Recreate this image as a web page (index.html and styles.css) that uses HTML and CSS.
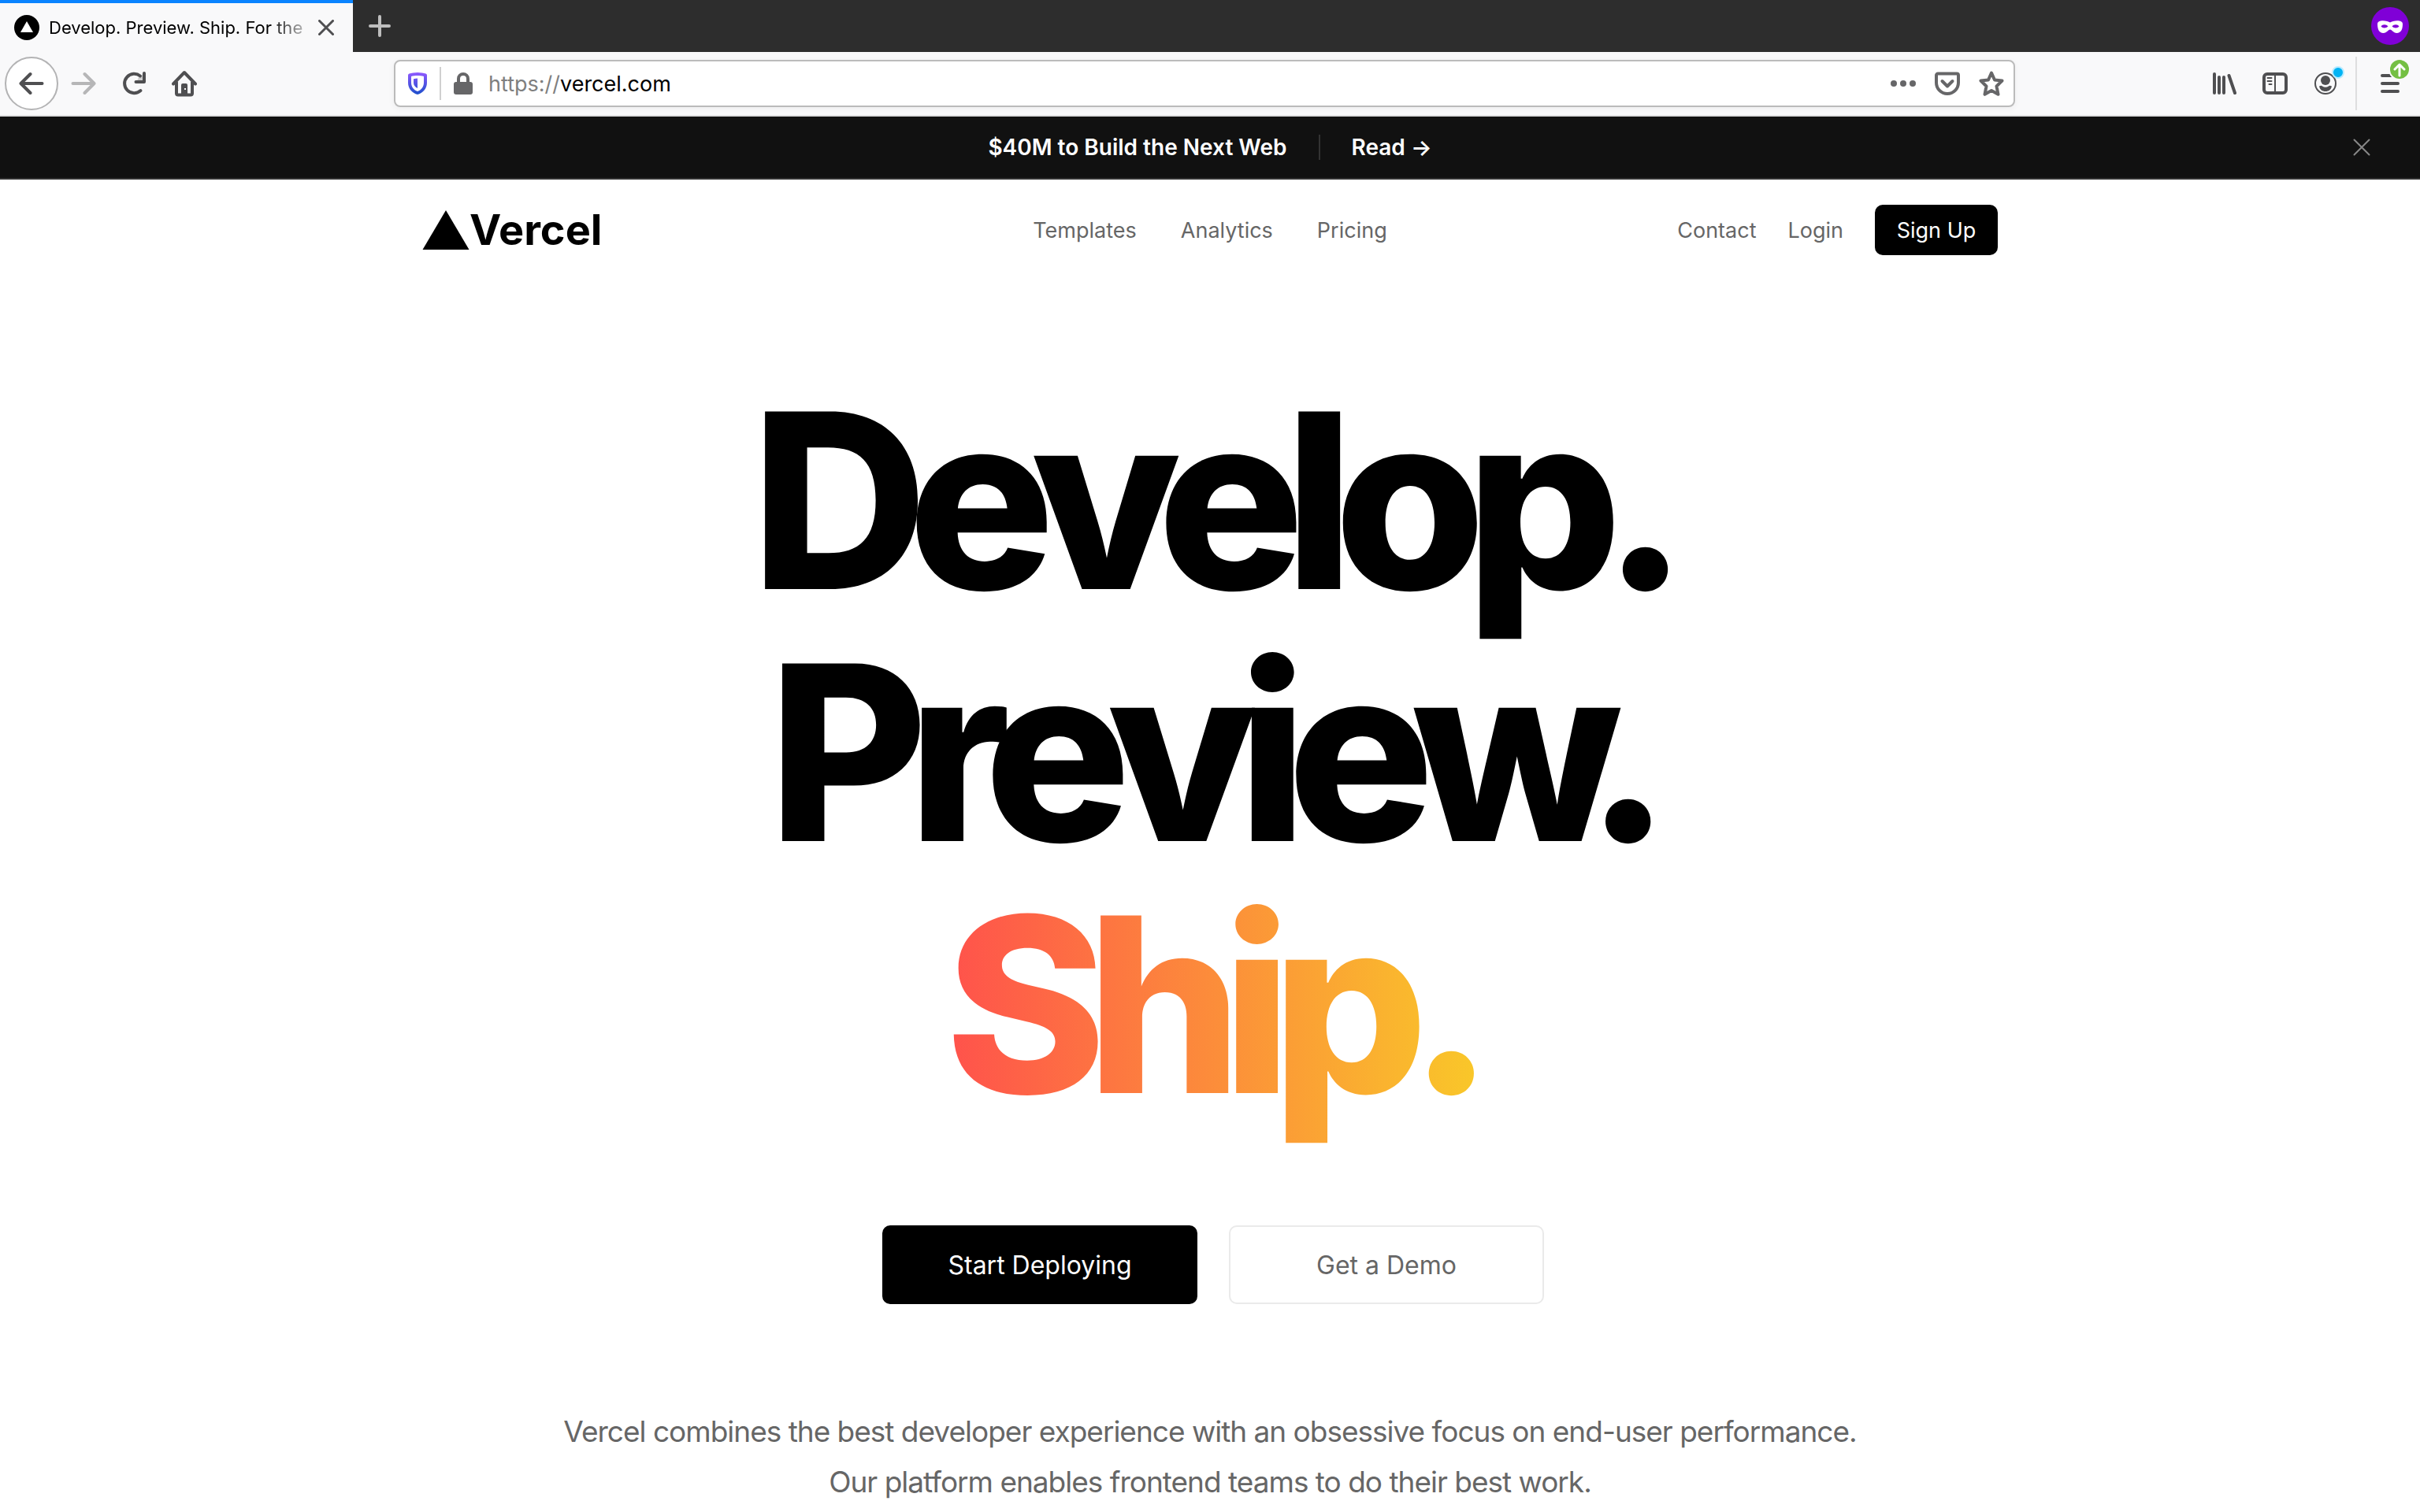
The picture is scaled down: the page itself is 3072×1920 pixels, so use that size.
FILE: index.html
```html
<!DOCTYPE html>
<html lang="en">
<head>
<meta charset="utf-8">
<title>Develop. Preview. Ship. For the best frontend teams</title>
<link rel="stylesheet" href="styles.css">
</head>
<body>
<div class="browser">
  <div class="tab-strip">
    <div class="tab">
      <svg class="favicon" viewBox="0 0 32 32" aria-hidden="true"><circle cx="16" cy="16" r="16" fill="#000"/><path d="M16 8l8 14H8z" fill="#fff"/></svg>
      <span class="tab-title">Develop. Preview. Ship. For the</span>
      <button class="icon-button tab-close" aria-label="Close tab"><svg width="20" height="20" viewBox="0 0 20 20"><path d="M1.500 1.500l17 17M18.500 1.500l-17 17" class="stroke"/></svg></button>
    </div>
    <button class="icon-button new-tab" aria-label="New tab"><svg width="28" height="28" viewBox="0 0 28 28"><path d="M14 2v24M2 14h24" class="stroke light"/></svg></button>
    <svg class="private" viewBox="0 0 48 48" role="img" aria-label="Private browsing"><circle cx="24" cy="24" r="24" fill="#8000d7"/><path d="M24 19.500C21 17 8 15 8 21.500C8 28 10 33 15.500 33C20 33 21.500 28.500 24 28.500C26.500 28.500 28 33 32.500 33C38 33 40 28 40 21.500C40 15 27 17 24 19.500z" fill="#fff"/><path d="M12.500 24.500c2-3 6.500-3 9 0c-2.500 2.500-7 2.500-9 0zM26.500 24.500c2.500-3 7-3 9 0c-2 2.500-6.500 2.500-9 0z" fill="#8000d7"/></svg>
  </div>

  <div class="toolbar">
    <div class="tool-group">
      <button class="icon-button back" aria-label="Back"><svg width="32" height="32" viewBox="0 0 32 32"><path d="M29.500 16H3M14.500 4L2.500 16l12 12" class="stroke thick"/></svg></button>
      <button class="icon-button forward" aria-label="Forward"><svg width="32" height="32" viewBox="0 0 32 32"><path d="M2.500 16H29M17.500 4l12 12-12 12" class="stroke thick faint"/></svg></button>
      <button class="icon-button tool" aria-label="Reload"><svg width="32" height="32" viewBox="0 0 32 32"><path d="M24.500 25A12.200 12.200 0 1 1 24 6.500" class="stroke thick"/><path d="M29 3v11H18.500" class="stroke thick"/><path d="M22 8l6-4v9h-8z" fill="#4f4f51" fill-opacity=".25"/></svg></button>
      <button class="icon-button tool" aria-label="Home"><svg width="32" height="34" viewBox="0 0 32 34"><path d="M2 17.500L16 3l14 14.500M6 15.500v14a2 2 0 0 0 2 2h16a2 2 0 0 0 2-2v-14" class="stroke thick"/><path d="M12 31V19a2 2 0 0 1 2-2h4a2 2 0 0 1 2 2v12z" fill="#4f4f51"/><rect x="16" y="23" width="2" height="2" fill="#f9f9fa"/></svg></button>
    </div>

    <div class="url-bar">
      <svg width="24" height="28" viewBox="0 0 24 28" role="img" aria-label="Tracking protection"><defs><linearGradient id="shield" x1="0" y1="0" x2="0" y2="1"><stop offset="0" stop-color="#9059ff"/><stop offset="1" stop-color="#1c4fcb"/></linearGradient></defs><path d="M12 0C15.500 0 20 .8 22.500 1.500Q24 2 24 3.500V13C24 20.500 18.500 26.500 12 28C5.500 26.500 0 20.500 0 13V3.500Q0 2 1.500 1.500C4 .8 8.500 0 12 0zM12 4C9 4 6.500 4.400 4 5v8C4 18.500 7.500 22.500 12 24C16.500 22.500 20 18.500 20 13V5C17.500 4.400 15 4 12 4zM12 7.500V20C8.800 18.500 7 16 7 13V8.200Q9.500 7.500 12 7.500z" fill="url(#shield)" fill-rule="evenodd"/></svg>
      <span class="url-divider"></span>
      <svg width="24" height="28" viewBox="0 0 24 28" role="img" aria-label="Secure connection"><path d="M6 14V8a6 6 0 0 1 12 0v6" fill="none" stroke="#666668" stroke-width="4"/><rect y="12" width="24" height="16" rx="3" fill="#666668"/></svg>
      <a class="url-text" href="https://vercel.com"><span class="scheme">https://</span>vercel.com</a>
      <div class="url-actions">
        <button class="icon-button action" aria-label="Page actions"><svg width="32" height="8" viewBox="0 0 32 8" fill="#666668"><circle cx="4" cy="4" r="4"/><circle cx="16" cy="4" r="4"/><circle cx="28" cy="4" r="4"/></svg></button>
        <button class="icon-button action" aria-label="Save to Pocket"><svg width="32" height="30" viewBox="0 0 32 30"><path d="M4 2.500h24a2 2 0 0 1 2 2V14a14 14 0 0 1-28 0V4.500a2 2 0 0 1 2-2z" class="stroke thick soft"/><path d="M9.500 12l6.500 6.500 6.500-6.500" class="stroke thick soft"/></svg></button>
        <button class="icon-button action" aria-label="Bookmark this page"><svg width="32" height="32" viewBox="0 0 32 32"><path d="M16 2.500l4 9 9.500 1-7 7 2 10.300L16 25l-8.500 4.800 2-10.300-7-7 9.500-1z" class="stroke thick soft"/></svg></button>
      </div>
    </div>

    <div class="tool-group">
      <button class="icon-button tool" aria-label="Library"><svg width="30" height="28" viewBox="0 0 30 28"><path d="M2 2v24M8 6v20M14 6v20M20.500 4l7.500 22" class="stroke thick"/></svg></button>
      <button class="icon-button tool" aria-label="Sidebars"><svg width="32" height="28" viewBox="0 0 32 28"><rect x="2" y="2" width="28" height="24" rx="4" class="stroke thick"/><path d="M16 3v22" stroke="#4f4f51" stroke-width="2"/><path d="M6.500 7h5M6.500 11h5M8.500 15h3" class="stroke thin"/></svg></button>
      <button class="icon-button tool account" aria-label="Account"><svg width="28" height="28" viewBox="0 0 28 28"><circle cx="14" cy="14" r="13" class="stroke thin"/><circle cx="14" cy="10" r="6" fill="#4f4f51"/><path d="M6 17.500Q9 16 10 17.500Q14 20 18 17.500Q19 16 22 17.500C21 22 18 24 14 24S7 22 6 17.500z" fill="#4f4f51"/></svg><span class="notice"></span></button>
      <span class="menu-divider"></span>
      <button class="icon-button menu" aria-label="Open menu"><svg width="24" height="24" viewBox="0 0 24 24"><path d="M2 2h20M2 12h20M2 22h20" class="stroke thick"/></svg><svg class="update" viewBox="0 0 28 28"><circle cx="14" cy="14" r="14" fill="#f9f9fa"/><circle cx="14" cy="14" r="12" fill="#74bf43"/><path d="M14 22V8M8 14l6-6 6 6" fill="none" stroke="#fff" stroke-width="3" stroke-linecap="round" stroke-linejoin="round"/></svg></button>
    </div>
  </div>
</div>

<div class="banner">
  <span>$40M to Build the Next Web</span>
  <span class="banner-divider"></span>
  <a href="#read">Read →</a>
  <button class="icon-button banner-close" aria-label="Dismiss"><svg width="22" height="22" viewBox="0 0 22 22"><path d="M1.500 1.500l19 19M20.500 1.500l-19 19" fill="none" stroke="#888" stroke-width="2" stroke-linecap="round"/></svg></button>
</div>

<header class="site-header">
  <a class="logo" href="#home"><svg width="60" height="52" viewBox="0 0 60 52" aria-hidden="true"><path d="M30 1l29.500 50H.5z"/></svg>Vercel</a>
  <nav class="links main-links">
    <a href="#templates">Templates</a>
    <a href="#analytics">Analytics</a>
    <a href="#pricing">Pricing</a>
  </nav>
  <nav class="links account-links">
    <a href="#contact">Contact</a>
    <a href="#login">Login</a>
    <button class="sign-up">Sign Up</button>
  </nav>
</header>

<main class="hero">
  <h1><span>Develop.</span><span>Preview.</span><span class="ship">Ship.</span></h1>
  <div class="cta">
    <button class="primary">Start Deploying</button>
    <button class="secondary">Get a Demo</button>
  </div>
  <p>Vercel combines the best developer experience with an obsessive focus on end-user performance.<br>Our platform enables frontend teams to do their best work.</p>
</main>
</body>
</html>
```
FILE: styles.css
```css
* { box-sizing: border-box; }

body {
  margin: 0;
  background: #fff;
  color: #000;
  font-family: Inter, "Liberation Sans", sans-serif;
  font-size: 27px;
}

a { color: inherit; text-decoration: none; }
button { font: inherit; cursor: pointer; }
svg { display: block; flex: none; }

.icon-button {
  display: flex;
  align-items: center;
  justify-content: center;
  flex: none;
  padding: 0;
  border: 0;
  background: none;
}

.stroke {
  fill: none;
  stroke: #4f4f51;
  stroke-width: 3;
  stroke-linecap: round;
  stroke-linejoin: round;
}
.stroke.thick { stroke-width: 4; }
.stroke.thin { stroke-width: 2; }
.stroke.faint { stroke: #b6b6b7; }
.stroke.light { stroke: #bebebe; stroke-width: 4; }
.stroke.soft { stroke: #666668; }

/* Browser tabs */
.tab-strip {
  display: flex;
  align-items: center;
  height: 66px;
  padding-right: 14px;
  background: #2d2d2d;
}
.tab {
  display: flex;
  align-items: center;
  width: 448px;
  height: 66px;
  padding: 0 16px 0 18px;
  border-top: 4px solid #0a84ff;
  background: #f9f9fa;
}
.favicon { width: 32px; height: 32px; }
.tab-title {
  flex: 1;
  margin: 0 10px 0 12px;
  overflow: hidden;
  font-size: 22px;
  line-height: 32px;
  white-space: nowrap;
  mask-image: linear-gradient(to right, #000 280px, transparent 340px);
}
.tab-close { width: 36px; height: 36px; }
.new-tab { width: 68px; height: 66px; }
.private { width: 48px; height: 48px; margin-left: auto; }

/* Browser toolbar */
.toolbar {
  display: flex;
  align-items: center;
  height: 82px;
  border-bottom: 2px solid #e0e0e1;
  background: #f9f9fa;
}
.tool-group { display: flex; align-items: center; }
.back {
  width: 68px;
  height: 68px;
  margin-left: 6px;
  border: 2px solid #b3b3b4;
  border-radius: 50%;
  background: #fff;
}
.forward { width: 64px; height: 64px; }
.tool { width: 64px; height: 64px; }
.url-bar {
  display: flex;
  flex: 1;
  align-items: center;
  height: 60px;
  margin: 0 234px;
  padding: 0 0 0 16px;
  border: 2px solid #bbb;
  border-radius: 8px;
  background: #fff;
  box-shadow: 0 2px 8px rgba(0, 0, 0, .05);
}
.url-divider { width: 2px; height: 42px; margin: 0 16px; background: #d0d0d0; }
.url-text { margin-left: 20px; }
.scheme { color: #7f7f7f; }
.url-actions { display: flex; margin-left: auto; }
.action { width: 56px; height: 56px; }
.account { position: relative; }
.notice {
  position: absolute;
  top: 10px;
  right: 8px;
  width: 16px;
  height: 16px;
  border: 2px solid #b8eaff;
  border-radius: 50%;
  background: #00b3f4;
}
.menu-divider { width: 2px; height: 68px; margin-left: 6px; background: #dededf; }
.menu { position: relative; width: 80px; height: 64px; padding-left: 4px; }
.update { position: absolute; top: 0; right: 12px; width: 28px; height: 28px; }

/* Announcement */
.banner {
  position: relative;
  display: flex;
  align-items: center;
  justify-content: center;
  gap: 40px;
  height: 80px;
  border-bottom: 2px solid #333;
  background: #111;
  color: #fff;
  font-size: 28px;
  font-weight: 600;
}
.banner-divider { width: 2px; height: 32px; background: #333; }
.banner-close { position: absolute; top: 7px; right: 42px; width: 64px; height: 64px; }

/* Site header */
.site-header {
  display: grid;
  grid-template-columns: 1fr auto 1fr;
  align-items: center;
  max-width: 2000px;
  height: 128px;
  margin: 0 auto;
  color: #666;
}
.logo {
  display: flex;
  align-items: center;
  color: #000;
  font-size: 54px;
  font-weight: 700;
  line-height: 56px;
}
.links { display: flex; align-items: center; }
.main-links { gap: 56px; }
.account-links { justify-content: flex-end; gap: 40px; }
.sign-up {
  width: 156px;
  height: 64px;
  border: 0;
  border-radius: 10px;
  background: #000;
  color: #fff;
}

/* Hero */
.hero { padding: 120px 32px 0; text-align: center; }
h1 {
  display: flex;
  flex-direction: column;
  align-items: center;
  margin: 0;
  font-size: 310px;
  font-weight: 800;
  line-height: 320px;
  letter-spacing: -0.08em;
}
.ship {
  padding: 32px 24px;
  margin: -32px 0;
  background: linear-gradient(90deg, #ff4d4d, #f9cb28);
  background-clip: text;
  color: transparent;
}
.cta {
  display: flex;
  justify-content: center;
  gap: 40px;
  margin: 120px 0 130px 8px;
}
.cta button {
  width: 400px;
  height: 100px;
  border: 2px solid #000;
  border-radius: 10px;
  font-size: 32px;
}
.primary { background: #000; color: #fff; }
.cta .secondary { border-color: #eaeaea; background: #fff; color: #666; }
.hero p {
  margin: 0;
  color: #666;
  font-size: 37px;
  line-height: 64px;
  letter-spacing: -1px;
}
```
